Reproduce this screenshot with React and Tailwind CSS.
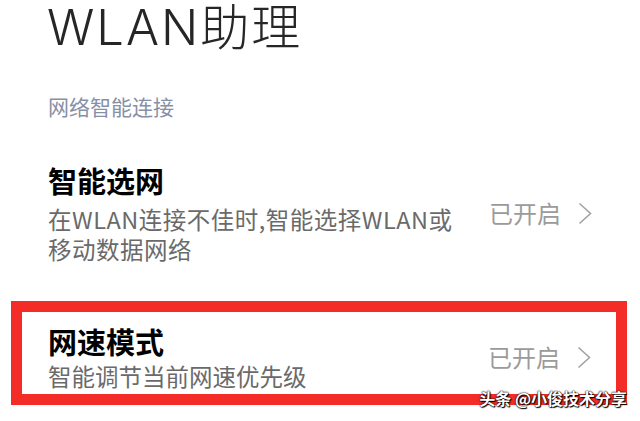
import React from 'react';

const cjk = { fontFamily: '"Noto Sans CJK SC", "Noto Sans", sans-serif' };

function Chevron() {
  return (
    <svg width="14" height="23" viewBox="0 0 14 23" className="shrink-0">
      <polyline points="1.5,1.5 12.5,11.5 1.5,21.5" fill="none" stroke="#a3a3a3" strokeWidth="1.6" strokeLinejoin="miter" />
    </svg>
  );
}

function Status() {
  return (
    <div className="flex items-center gap-[17px] shrink-0">
      <span className="text-[24px] leading-[30px] text-[#9b9b9b]">已开启</span>
      <Chevron />
    </div>
  );
}

export default function App() {
  return (
    <div className="relative w-[640px] h-[421px] overflow-hidden bg-white" style={cjk}>
      {/* page title */}
      <div
        className="pl-[47px] pt-[2px] text-[49px] leading-[51px] font-light text-[#262626] tracking-[2px]"
        style={{ fontFamily: '"Inter", "Noto Sans CJK SC", sans-serif' }}
      >
        WLAN助理
      </div>

      {/* section header */}
      <div className="mt-[38px] pl-[48px] text-[21px] leading-[30px] text-[#8790a6]">
        网络智能连接
      </div>

      {/* item 1 */}
      <div className="mt-[41px] flex items-center justify-between pl-[48px] pr-[48px]">
        <div>
          <div className="text-[29px] leading-[36px] font-bold text-black">智能选网</div>
          <div className="mt-[6px] text-[23.5px] leading-[30px] text-[#6a6a6a] tracking-[0.5px]">
            <div>在WLAN连接不佳时,智能选择WLAN或</div>
            <div>移动数据网络</div>
          </div>
        </div>
        <Status />
      </div>

      {/* item 2, marked with a red frame */}
      <div className="mt-[37px] pl-[11px] pr-[13px]">
        <div className="border-[11px] border-[#f42c27] flex items-center justify-between pl-[26px] pr-[25px] pt-[11px] pb-[3px]">
          <div>
            <div className="text-[29px] leading-[36px] font-bold text-black">网速模式</div>
            <div className="mt-[2px] text-[23.5px] leading-[30px] text-[#6a6a6a]">智能调节当前网速优先级</div>
          </div>
          <Status />
        </div>
      </div>

      {/* watermark */}
      <div className="absolute right-[13px] bottom-[15px] text-[16px] leading-[16px] font-bold text-white [text-shadow:0_0_1px_#000,0_0_2px_#000,1px_1px_1px_#000]">
        头条 @小俊技术分享
      </div>
    </div>
  );
}
